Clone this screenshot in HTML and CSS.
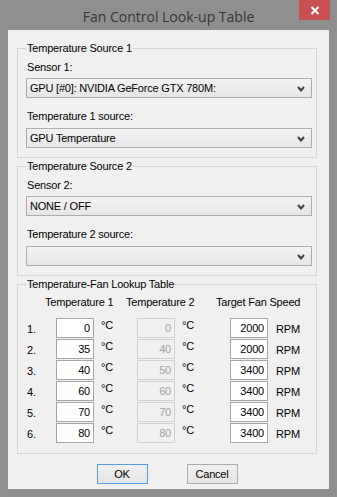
FILE: index.html
```html
<!DOCTYPE html>
<html lang="en">
<head>
    <meta charset="UTF-8">
    <meta name="viewport" content="width=device-width, initial-scale=1.0">
    <title>Fan Control Look-up Table</title>
    <link rel="stylesheet" href="styles.css">
</head>
<body>
    <div class="window">
        <div class="titlebar">
            <span class="title">Fan Control Look-up Table</span>
            <div class="close-btn">
                <svg width="10" height="9" viewBox="0 0 10 9">
                    <path d="M1.5 1 L8.5 8 M8.5 1 L1.5 8" stroke="#fff" stroke-width="2" fill="none"/>
                </svg>
            </div>
        </div>

        <div class="client">
            <!-- Source 1 -->
            <fieldset class="group">
                <legend>Temperature Source 1</legend>
                <div class="field-label">Sensor 1:</div>
                <div class="combo">
                    <span>GPU [#0]: NVIDIA GeForce GTX 780M:</span>
                    <svg class="chevron" width="8" height="6" viewBox="0 0 8 6"><polyline points="1,1 4,4.5 7,1" stroke="#404040" stroke-width="2" fill="none"/></svg>
                </div>
                <div class="field-label second">Temperature 1 source:</div>
                <div class="combo">
                    <span>GPU Temperature</span>
                    <svg class="chevron" width="8" height="6" viewBox="0 0 8 6"><polyline points="1,1 4,4.5 7,1" stroke="#404040" stroke-width="2" fill="none"/></svg>
                </div>
            </fieldset>

            <!-- Source 2 -->
            <fieldset class="group">
                <legend>Temperature Source 2</legend>
                <div class="field-label">Sensor 2:</div>
                <div class="combo">
                    <span>NONE / OFF</span>
                    <svg class="chevron" width="8" height="6" viewBox="0 0 8 6"><polyline points="1,1 4,4.5 7,1" stroke="#404040" stroke-width="2" fill="none"/></svg>
                </div>
                <div class="field-label second">Temperature 2 source:</div>
                <div class="combo">
                    <span></span>
                    <svg class="chevron" width="8" height="6" viewBox="0 0 8 6"><polyline points="1,1 4,4.5 7,1" stroke="#404040" stroke-width="2" fill="none"/></svg>
                </div>
            </fieldset>

            <!-- Lookup table -->
            <fieldset class="group lookup">
                <legend>Temperature-Fan Lookup Table</legend>
                <div class="table-head">
                    <span class="head-t1">Temperature 1</span>
                    <span class="head-t2">Temperature 2</span>
                    <span class="head-fan">Target Fan Speed</span>
                </div>
                <div class="table-grid">
                    <span class="row-num">1.</span>
                    <div class="edit">0</div><span class="unit">°C</span>
                    <div class="edit disabled">0</div><span class="unit">°C</span>
                    <div class="edit">2000</div><span class="rpm">RPM</span>

                    <span class="row-num">2.</span>
                    <div class="edit">35</div><span class="unit">°C</span>
                    <div class="edit disabled">40</div><span class="unit">°C</span>
                    <div class="edit">2000</div><span class="rpm">RPM</span>

                    <span class="row-num">3.</span>
                    <div class="edit">40</div><span class="unit">°C</span>
                    <div class="edit disabled">50</div><span class="unit">°C</span>
                    <div class="edit">3400</div><span class="rpm">RPM</span>

                    <span class="row-num">4.</span>
                    <div class="edit">60</div><span class="unit">°C</span>
                    <div class="edit disabled">60</div><span class="unit">°C</span>
                    <div class="edit">3400</div><span class="rpm">RPM</span>

                    <span class="row-num">5.</span>
                    <div class="edit">70</div><span class="unit">°C</span>
                    <div class="edit disabled">70</div><span class="unit">°C</span>
                    <div class="edit">3400</div><span class="rpm">RPM</span>

                    <span class="row-num">6.</span>
                    <div class="edit">80</div><span class="unit">°C</span>
                    <div class="edit disabled">80</div><span class="unit">°C</span>
                    <div class="edit">3400</div><span class="rpm">RPM</span>
                </div>
            </fieldset>

            <div class="buttons">
                <button class="btn btn-default">OK</button>
                <button class="btn">Cancel</button>
            </div>
        </div>
    </div>
</body>
</html>
```

FILE: styles.css
```css
* {
    margin: 0;
    padding: 0;
    box-sizing: border-box;
}

body {
    font-family: "Liberation Sans", Arial, sans-serif;
    font-size: 11px;
    letter-spacing: -0.2px;
    color: #000;
    background: #8f8f8f;
}

.window {
    width: 337px;
    height: 497px;
    background: #8f8f8f;
    padding: 0 8px 8px;
    position: relative;
}

.titlebar {
    height: 30px;
    display: flex;
    justify-content: center;
    align-items: center;
    padding-top: 2px;
}

.title {
    font-family: "Open Sans", "Noto Sans", sans-serif;
    font-size: 14px;
    letter-spacing: 0;
    color: #353535;
}

.close-btn {
    position: absolute;
    top: 0;
    left: 299px;
    width: 31px;
    height: 20px;
    background: #c75050;
    display: flex;
    justify-content: center;
    align-items: center;
}

.client {
    background: #f0f0f0;
    height: 459px;
    padding: 11px 12px 6px 9px;
}

.group {
    border: 1px solid #d5d5d5;
    padding: 5px 4px 9px 8px;
    margin-bottom: 1px;
}

.group legend {
    padding: 0 1px;
    line-height: 14px;
}

.field-label {
    line-height: 14px;
    margin-bottom: 4px;
    padding-left: 1px;
}

.field-label.second {
    margin-top: 11px;
    margin-bottom: 5px;
}

.combo {
    height: 20px;
    border: 1px solid #acacac;
    background: linear-gradient(#f2f2f2, #e6e6e6);
    display: flex;
    align-items: center;
    justify-content: space-between;
    padding: 0 6px 0 3px;
}

.chevron {
    display: block;
    margin-top: 1px;
}

.lookup {
    padding: 4px 4px 10px 9px;
}

.lookup legend {
    margin-left: -1px;
}

.table-head {
    display: flex;
    line-height: 14px;
    padding-left: 18px;
    margin-bottom: 9px;
}

.head-t1 {
    width: 81px;
}

.head-t2 {
    width: 90px;
}

.table-grid {
    display: grid;
    grid-template-columns: 29px 38px 43px 38px 55px 38px 1fr;
    grid-auto-rows: 20px;
    row-gap: 1px;
    align-items: center;
}

.row-num {
    padding-top: 2px;
}

.edit {
    height: 20px;
    border: 1px solid #a5a5a5;
    background: #fff;
    text-align: right;
    padding-right: 3px;
    line-height: 18px;
}

.edit.disabled {
    border-color: #d0d0d0;
    background: #f0f0f0;
    color: #a0a0a0;
}

.unit {
    align-self: start;
    padding-left: 7px;
    padding-top: 1px;
}

.rpm {
    padding-left: 8px;
    padding-top: 2px;
}

.buttons {
    display: flex;
    justify-content: center;
    gap: 39px;
    margin-top: 10px;
}

.btn {
    width: 51px;
    height: 20px;
    font-family: "Liberation Sans", Arial, sans-serif;
    font-size: 11px;
    letter-spacing: -0.2px;
    color: #000;
    border: 1px solid #acacac;
    background: linear-gradient(#f0f0f0, #e5e5e5);
}

.btn-default {
    border-color: #569de5;
}
```
